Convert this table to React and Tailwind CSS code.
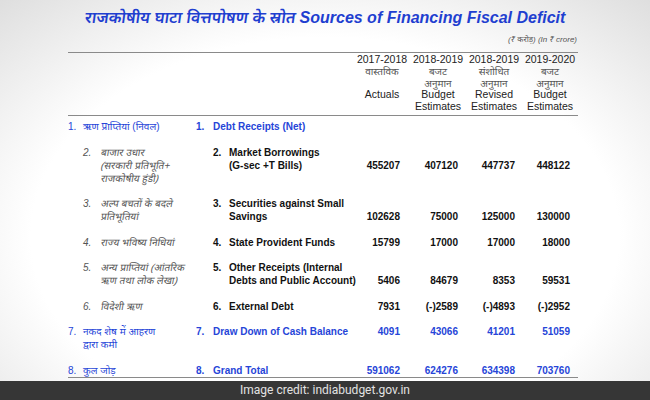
const headers = [
  ["2017-2018", "वास्तविक", "", "Actuals", ""],
  ["2018-2019", "बजट", "अनुमान", "Budget", "Estimates"],
  ["2018-2019", "संशोधित", "अनुमान", "Revised", "Estimates"],
  ["2019-2020", "बजट", "अनुमान", "Budget", "Estimates"],
];

const rows = [
  { n: "1.", hi: ["ऋण प्राप्तियां (निवल)"], en: ["Debt Receipts (Net)"], vals: [], blue: true },
  { n: "2.", hi: ["बाजार उधार", "(सरकारी प्रतिभूति+", "राजकोषीय हुंडी)"], en: ["Market Borrowings", "(G-sec +T Bills)"], vals: ["455207", "407120", "447737", "448122"] },
  { n: "3.", hi: ["अल्प बचतों के बदले", "प्रतिभूतियां"], en: ["Securities against Small", "Savings"], vals: ["102628", "75000", "125000", "130000"] },
  { n: "4.", hi: ["राज्य भविष्य निधियां"], en: ["State Provident Funds"], vals: ["15799", "17000", "17000", "18000"] },
  { n: "5.", hi: ["अन्य प्राप्तियां (आंतरिक", "ऋण तथा लोक लेखा)"], en: ["Other Receipts (Internal", "Debts and Public Account)"], vals: ["5406", "84679", "8353", "59531"] },
  { n: "6.", hi: ["विदेशी ऋण"], en: ["External Debt"], vals: ["7931", "(-)2589", "(-)4893", "(-)2952"] },
  { n: "7.", hi: ["नकद शेष में आहरण", "द्वारा कमी"], en: ["Draw Down of Cash Balance"], vals: ["4091", "43066", "41201", "51059"], blue: true },
  { n: "8.", hi: ["कुल जोड़"], en: ["Grand Total"], vals: ["591062", "624276", "634398", "703760"], blue: true, last: true },
];

const valPad = ["pr-[10px]", "pr-[8px]", "pr-[7px]", "pr-[8px]"];

function Lines({ lines, slant }) {
  return lines.map((l, i) => (
    <div key={i} className={`whitespace-nowrap ${slant ? "-skew-x-[10deg] origin-bottom-left" : ""}`}>{l}</div>
  ));
}

function Row({ row }) {
  const blue = row.blue;
  return (
    <div className={`flex leading-[13px] text-[10px] ${row.last ? "border-b border-[#8a8a8a]" : ""}`}>
      <div className={`w-[128px] shrink-0 flex ${blue ? "text-[#2645d8]" : "pl-[15px] italic text-[#555]"}`}>
        <span className={blue ? "w-[15px] shrink-0" : "w-[17px] shrink-0"}>{row.n}</span>
        <div><Lines lines={row.hi} slant={!blue} /></div>
      </div>
      <div className={`flex items-end self-start font-bold ${blue ? "text-[#2645d8]" : "text-[#111]"}`}>
        <div className={`w-[158px] shrink-0 flex ${blue ? "" : "pl-[17px]"}`}>
          <span className={blue ? "w-[17px] shrink-0" : "w-[16px] shrink-0"}>{row.n}</span>
          <div><Lines lines={row.en} /></div>
        </div>
        {row.vals.map((v, i) => (
          <div key={i} className={`w-[56px] shrink-0 text-right ${valPad[i]}`}>{v}</div>
        ))}
      </div>
    </div>
  );
}

export default function App() {
  return (
    <div className="w-[650px] h-[400px] flex flex-col font-['Liberation_Sans','Noto_Sans',sans-serif] overflow-hidden">
      <div className="flex-1 bg-[radial-gradient(ellipse_78%_90%_at_50%_62%,#ffffff_58%,#d9d9d9_100%)]">
        <h1 className="pt-[8px] text-center text-[16px] leading-[20px] italic text-[#1f3fd0]">
          <span className="font-semibold inline-block -skew-x-[8deg]">राजकोषीय घाटा वित्तपोषण के स्रोत</span>{" "}
          <span className="font-bold">Sources of Financing Fiscal Deficit</span>
        </h1>
        <div className="ml-[68px] w-[510px]">
          <p className="mt-[7px] text-right italic text-[8px] leading-[10px] text-[#555] pr-[1px]">
            (₹ करोड़) (In ₹ crore)
          </p>
          <div className="mt-[7px] border-t border-b border-[#8a8a8a] pt-[1px] pb-[2px] grid grid-cols-[286px_repeat(4,56px)] text-[10.5px] leading-[11.75px] text-[#222]">
            <div />
            {headers.map((h, i) => (
              <div key={i} className="text-center">
                {h.map((t, j) => (
                  <div key={j} className={`h-[11.75px] whitespace-nowrap ${j === 1 || j === 2 ? "text-[#555] text-[10px]" : ""}`}>{t}</div>
                ))}
              </div>
            ))}
          </div>
          <div className="flex flex-col gap-[12.5px] pt-[4.5px]">
            {rows.map((r, i) => (
              <Row key={i} row={r} />
            ))}
          </div>
        </div>
      </div>
      <div className="h-[19px] shrink-0 bg-[#363636] text-center text-[12px] leading-[19px] text-[#e2e2e2] font-['Roboto',sans-serif]">
        Image credit: indiabudget.gov.in
      </div>
    </div>
  );
}
